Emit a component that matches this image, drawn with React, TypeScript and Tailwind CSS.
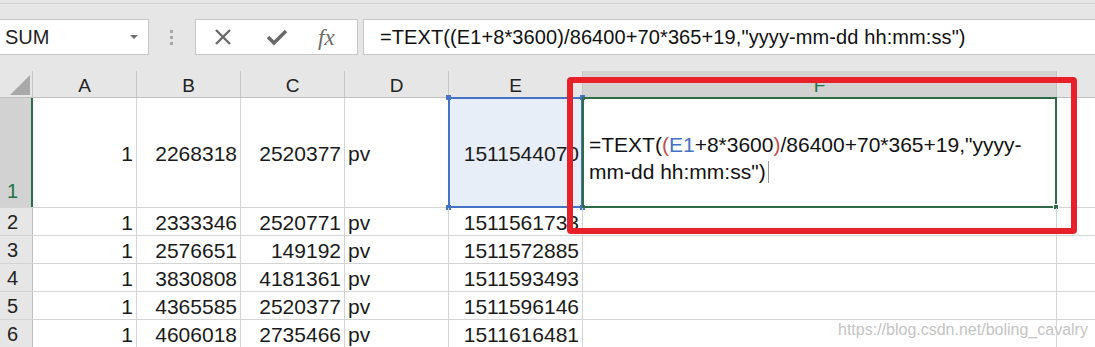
import React from "react";

const FONT = { fontFamily: '"Liberation Sans", Arial, sans-serif' };

const rows: string[][] = [
  ["1", "2268318", "2520377", "pv", "1511544070"],
  ["1", "2333346", "2520771", "pv", "1511561733"],
  ["1", "2576651", "149192", "pv", "1511572885"],
  ["1", "3830808", "4181361", "pv", "1511593493"],
  ["1", "4365585", "2520377", "pv", "1511596146"],
  ["1", "4606018", "2735466", "pv", "1511616481"],
];

const colW = [104, 104, 104, 104, 134];
const letters = ["A", "B", "C", "D", "E"];

function Handle({ className }: { className: string }) {
  return <div className={"absolute w-[5px] h-[5px] bg-[#4472c4] " + className} />;
}

export default function App() {
  return (
    <div className="relative w-[1095px] h-[347px] overflow-hidden bg-white text-black" style={FONT}>
      {/* Toolbar */}
      <div className="h-[71px] bg-[#e6e6e6] flex flex-col">
        <div className="h-[3px]" />
        <div className="h-px bg-[#d4d4d4]" />
        <div className="mt-[15px] flex items-stretch h-[36px]">
          <div className="w-[149px] bg-white border border-[#c6c6c6] border-l-0 flex items-center justify-between pl-[5px] pr-[10px]">
            <span className="text-[20px] text-[#222]">SUM</span>
            <div className="w-0 h-0 border-l-[4px] border-r-[4px] border-t-[4px] border-l-transparent border-r-transparent border-t-[#707070]" />
          </div>
          <div className="w-[46px] flex flex-col items-center justify-center gap-[3px] pr-[1px]">
            <div className="w-[3px] h-[3px] bg-[#a8a8a8]" />
            <div className="w-[3px] h-[3px] bg-[#a8a8a8]" />
            <div className="w-[3px] h-[3px] bg-[#a8a8a8]" />
          </div>
          <div className="w-[163px] bg-white border border-[#c6c6c6] flex items-center">
            <svg width="20" height="20" viewBox="0 0 20 20" className="ml-[17px]">
              <path d="M3 3 L17 17 M17 3 L3 17" stroke="#6a6a6a" strokeWidth="2.4" fill="none" />
            </svg>
            <svg width="22" height="20" viewBox="0 0 22 20" className="ml-[33px]">
              <path d="M2 10 L8 16 L20 4" stroke="#6a6a6a" strokeWidth="3.6" fill="none" strokeLinejoin="miter" />
            </svg>
            <span
              className="ml-[30px] text-[23px] italic text-[#6a6a6a] leading-none"
              style={{ fontFamily: '"Liberation Serif", "Times New Roman", serif' }}
            >
              fx
            </span>
          </div>
          <div className="w-[5px]" />
          <div className="flex-1 bg-white border border-[#c6c6c6] border-r-0 flex items-center pl-[16px]">
            <span className="text-[20px] text-[#111] whitespace-nowrap tracking-[0.1px]">
              =TEXT((E1+8*3600)/86400+70*365+19,"yyyy-mm-dd hh:mm:ss")
            </span>
          </div>
        </div>
      </div>

      {/* Column header row */}
      <div className="flex h-[27px] bg-[#e6e6e6] border-b border-[#bfbfbf]">
        <div className="relative w-[33px] shrink-0 border-r border-[#c6c6c6]">
          <div className="absolute right-[2px] bottom-[2px] w-0 h-0 border-solid border-l-[20px] border-b-[20px] border-l-transparent border-b-[#a9a9a9]" />
        </div>
        {letters.map((l, i) => (
          <div
            key={l}
            style={{ width: colW[i] }}
            className="shrink-0 border-r border-[#c6c6c6] flex items-center justify-center text-[19px] text-[#222] pt-[4px]"
          >
            {l}
          </div>
        ))}
        <div className="w-[474px] shrink-0 bg-[#d2d2d2] border-r border-[#c6c6c6] flex items-center justify-center text-[19px] text-[#217346] pt-[4px]">
          F
        </div>
        <div className="flex-1" />
      </div>

      {/* Rows */}
      {rows.map((r, ri) => {
        const first = ri === 0;
        return (
          <div key={ri} className={"flex border-b border-[#d4d4d4] " + (first ? "h-[110px]" : "h-[28px]")}>
            <div
              className={
                "w-[33px] shrink-0 flex pl-[7px] text-[20px] leading-none " +
                (first
                  ? "bg-[#d2d2d2] border-r-2 border-[#217346] text-[#217346] items-end pb-[6px]"
                  : "bg-[#e6e6e6] border-r border-[#bfbfbf] text-[#222] items-center pt-[1px]")
              }
            >
              {ri + 1}
            </div>
            {r.map((v, ci) => {
              const isE1 = first && ci === 4;
              return (
                <div
                  key={ci}
                  style={{ width: colW[ci] }}
                  className={
                    "relative shrink-0 flex items-center border-r border-[#d4d4d4] text-[21px] leading-none whitespace-nowrap pt-[2px] text-[#1a1a1a] " +
                    (ci === 3 ? "justify-start pl-[3px] " : "justify-end pr-[3px] ") +
                    (isE1 ? "bg-[#e8eef8]" : "")
                  }
                >
                  {v}
                  {isE1 && (
                    <div className="absolute -left-[1px] -top-[1px] -right-[1px] -bottom-[1px] border-2 border-[#4472c4]">
                      <Handle className="-left-[4px] -top-[4px]" />
                      <Handle className="-right-[4px] -top-[4px]" />
                      <Handle className="-left-[4px] -bottom-[4px]" />
                      <Handle className="-right-[4px] -bottom-[4px]" />
                    </div>
                  )}
                </div>
              );
            })}
            <div className="w-[474px] shrink-0 relative border-r border-[#d4d4d4]">
              {first && (
                <>
                  <div className="pl-[6px] pt-[33px] text-[21px] leading-[27px] whitespace-nowrap text-[#111]">
                    <div>
                      =TEXT(<span className="text-[#c0504d]">(</span>
                      <span className="text-[#4472c4]">E1</span>+8*3600
                      <span className="text-[#c0504d]">)</span>/86400+70*365+19,"yyyy-
                    </div>
                    <div className="flex items-center">
                      mm-dd hh:mm:ss")
                      <span className="inline-block w-px h-[22px] bg-[#9a9a9a] ml-[2px]" />
                    </div>
                  </div>
                  <div className="absolute -left-[1px] -top-[1px] -right-[1px] -bottom-[1px] border-2 border-[#2e6b46]">
                    <div className="absolute -right-[4px] -bottom-[4px] w-[6px] h-[6px] bg-[#2e6b46] border border-white" />
                  </div>
                </>
              )}
            </div>
            <div className="flex-1" />
          </div>
        );
      })}

      {/* Red annotation box */}
      <div className="absolute left-[567px] top-[77px] w-[510px] h-[157px] border-[6px] border-[#e8202a] rounded-[4px]" />

      {/* Watermark */}
      <div
        className="absolute left-[838px] top-[318px] text-[16px] text-[#c4c4c4] whitespace-nowrap"
        style={{ textShadow: "0 0 1px #fff, 0 0 2px #fff" }}
      >
        https://blog.csdn.net/boling_cavalry
      </div>
    </div>
  );
}
